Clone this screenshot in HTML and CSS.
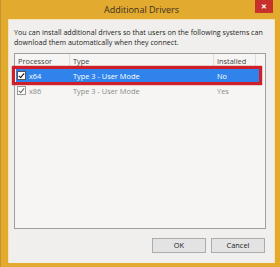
FILE: index.html
```html
<!DOCTYPE html>
<html lang="en">
<head>
    <meta charset="UTF-8">
    <title>Additional Drivers</title>
    <link rel="stylesheet" href="styles.css">
</head>
<body>
    <div class="window">
        <!-- Title bar -->
        <div class="title-bar">
            <div class="title-spacer"></div>
            <div class="title">Additional Drivers</div>
            <div class="close-button">&#x2715;</div>
        </div>

        <div class="dialog-body">
            <p class="intro">You can install additional drivers so that users on the following systems can download them automatically when they connect.</p>

            <!-- Driver list -->
            <div class="driver-list">
                <div class="list-header">
                    <div class="col col-processor">Processor</div>
                    <div class="col col-type">Type</div>
                    <div class="col col-installed">Installed</div>
                    <div class="col col-rest"></div>
                </div>
                <div class="list-row selected">
                    <div class="col col-processor"><span class="check checked"></span>x64</div>
                    <div class="col col-type">Type 3 - User Mode</div>
                    <div class="col col-installed">No</div>
                </div>
                <div class="list-row disabled">
                    <div class="col col-processor"><span class="check checked"></span>x86</div>
                    <div class="col col-type">Type 3 - User Mode</div>
                    <div class="col col-installed">Yes</div>
                </div>
                <div class="highlight-box"></div>
            </div>

            <!-- Buttons -->
            <div class="button-row">
                <div class="button">OK</div>
                <div class="button">Cancel</div>
            </div>
        </div>
    </div>
</body>
</html>
```

FILE: styles.css
```css
* {
    margin: 0;
    padding: 0;
    box-sizing: border-box;
    font-family: "Open Sans", "Noto Sans", sans-serif;
}

body {
    overflow: hidden;
    background-color: #fff;
}

.window {
    display: flex;
    flex-direction: column;
    width: 280px;
    height: 267px;
    padding: 0 5px 4px 7px;
    background-color: #e3aa30;
    border-left: 1px solid #c8922a;
}

.title-bar {
    display: grid;
    grid-template-columns: 1fr auto 1fr;
    align-items: start;
    height: 19px;
    flex-shrink: 0;
}

.title {
    padding-top: 3px;
    font-size: 9px;
    color: #3a3020;
}

.close-button {
    justify-self: end;
    width: 18px;
    height: 13px;
    margin-right: 2px;
    background-color: #c7302b;
    color: #fff;
    font-size: 7px;
    font-weight: bold;
    text-align: center;
    line-height: 13px;
}

.dialog-body {
    display: flex;
    flex-direction: column;
    flex: 1;
    padding: 7px 8px 10px 5px;
    background-color: #f0efed;
    border: 1px solid #f6e3b5;
    border-bottom: none;
}

.intro {
    margin-right: -6px;
    font-size: 7.1px;
    line-height: 10px;
    color: #1e1e1e;
}

.driver-list {
    position: relative;
    flex: 1;
    margin-top: 6px;
    background-color: #f6f5f3;
    border: 1px solid #9f9f9f;
}

.list-header,
.list-row {
    display: flex;
    font-size: 7.4px;
}

.list-header {
    height: 13px;
    color: #444;
    margin-bottom: 2px;
}

.list-header .col {
    border-right: 1px solid #e0e0e0;
}

.list-header .col-rest {
    border-right: none;
}

.col {
    display: flex;
    align-items: center;
    padding-left: 3px;
    white-space: nowrap;
}

.col-processor {
    width: 55px;
}

.col-type {
    width: 144px;
}

.col-installed {
    width: 42px;
}

.col-rest {
    flex: 1;
}

.list-row {
    height: 13px;
    margin: 0 1px 2px 1px;
}

.list-row .col-processor {
    width: 54px;
    padding-left: 1px;
}

.list-row.selected {
    background-color: #2f83ea;
    color: #fff;
    width: 244px;
}

.list-row.disabled {
    color: #8a8a8a;
}

.check {
    display: inline-block;
    position: relative;
    width: 9px;
    height: 9px;
    margin-right: 3px;
    background-color: #fff;
    border: 1px solid #555;
}

.check.checked::after {
    content: "";
    position: absolute;
    left: 2px;
    top: 0;
    width: 2px;
    height: 5px;
    border-right: 1.5px solid #111;
    border-bottom: 1.5px solid #111;
    transform: rotate(40deg);
}

.disabled .check {
    border-color: #999;
}

.disabled .check.checked::after {
    border-color: #666;
}

/* red annotation rectangle drawn over the selected row */
.highlight-box {
    position: absolute;
    left: -3px;
    top: 12px;
    width: 250px;
    height: 19px;
    border: 3px solid #d01f2b;
    box-shadow: 0 0 1px #a00;
}

.button-row {
    display: flex;
    justify-content: flex-end;
    gap: 5px;
    margin-top: 9px;
    padding-right: 1px;
}

.button {
    width: 54px;
    height: 15px;
    font-size: 7.4px;
    line-height: 13px;
    text-align: center;
    color: #222;
    background-color: #e3e3e3;
    border: 1px solid #acacac;
}
```
